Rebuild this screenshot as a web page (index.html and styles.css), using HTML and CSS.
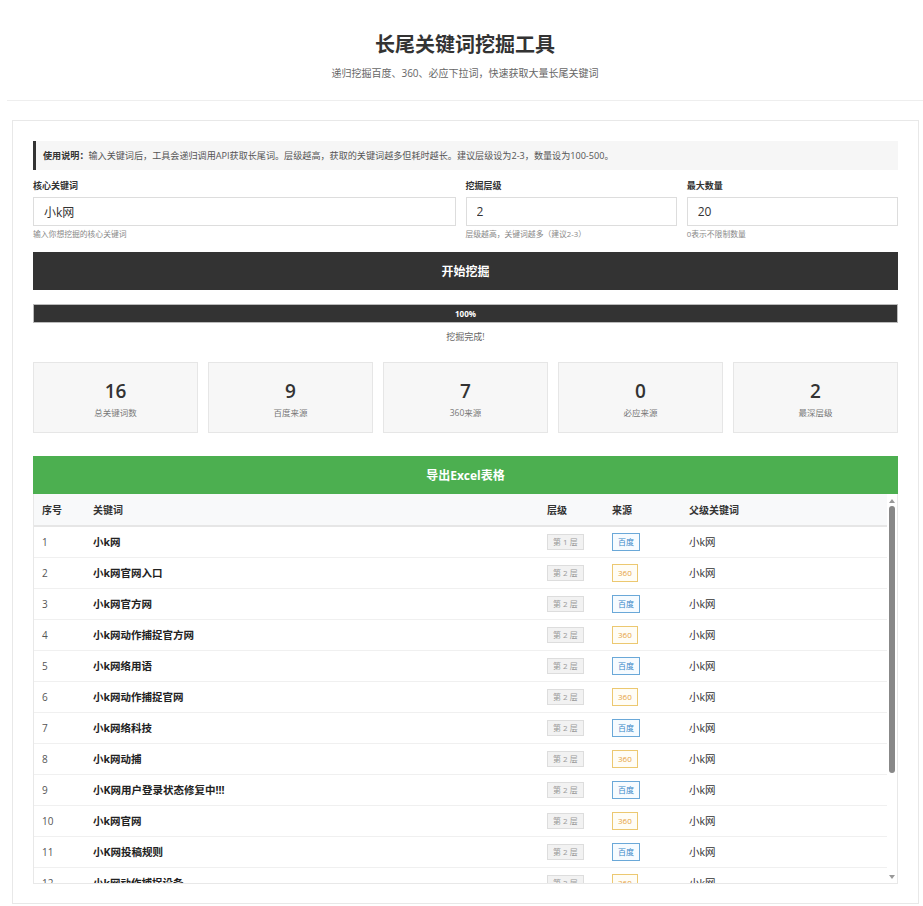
FILE: index.html
```html
<!DOCTYPE html>
<html lang="zh-CN">
<head>
    <meta charset="UTF-8">
    <meta name="viewport" content="width=device-width, initial-scale=1.0">
    <title>长尾关键词挖掘工具</title>
    <link rel="stylesheet" href="styles.css">
</head>
<body>
<div class="page">
    <header class="header">
        <h1>长尾关键词挖掘工具</h1>
        <p class="subtitle">递归挖掘百度、360、必应下拉词，快速获取大量长尾关键词</p>
    </header>

    <main class="card">
        <div class="notice">
            <strong>使用说明：</strong>输入关键词后，工具会递归调用API获取长尾词。层级越高，获取的关键词越多但耗时越长。建议层级设为2-3，数量设为100-500。
        </div>

        <div class="form-row">
            <div class="field">
                <label for="keyword">核心关键词</label>
                <input type="text" id="keyword" value="小k网">
                <div class="hint">输入你想挖掘的核心关键词</div>
            </div>
            <div class="field">
                <label for="depth">挖掘层级</label>
                <input type="text" id="depth" value="2">
                <div class="hint">层级越高，关键词越多（建议2-3）</div>
            </div>
            <div class="field">
                <label for="maxCount">最大数量</label>
                <input type="text" id="maxCount" value="20">
                <div class="hint">0表示不限制数量</div>
            </div>
        </div>

        <button class="btn btn-start">开始挖掘</button>

        <div class="progress">
            <div class="progress-fill" style="width: 100%">100%</div>
        </div>
        <div class="status">挖掘完成!</div>

        <div class="stats">
            <div class="stat"><div class="stat-num">16</div><div class="stat-label">总关键词数</div></div>
            <div class="stat"><div class="stat-num">9</div><div class="stat-label">百度来源</div></div>
            <div class="stat"><div class="stat-num">7</div><div class="stat-label">360来源</div></div>
            <div class="stat"><div class="stat-num">0</div><div class="stat-label">必应来源</div></div>
            <div class="stat"><div class="stat-num">2</div><div class="stat-label">最深层级</div></div>
        </div>

        <button class="btn btn-export">导出Excel表格</button>

        <div class="table-box">
            <div class="table-wrap">
                <table class="result-table">
                    <colgroup>
                        <col class="c-idx"><col class="c-kw"><col class="c-lvl"><col class="c-src"><col>
                    </colgroup>
                    <thead>
                        <tr><th>序号</th><th>关键词</th><th>层级</th><th>来源</th><th>父级关键词</th></tr>
                    </thead>
                    <tbody id="rows"></tbody>
                </table>
            </div>
            <!-- scrollbar drawn by hand, the screenshot browser hides native ones -->
            <div class="scrollbar">
                <span class="arrow arrow-up"></span>
                <span class="thumb"></span>
                <span class="arrow arrow-down"></span>
            </div>
        </div>
    </main>
</div>

<script>
    const data = [
        ['小k网', 1, 'baidu'],
        ['小k网官网入口', 2, '360'],
        ['小k网官方网', 2, 'baidu'],
        ['小k网动作捕捉官方网', 2, '360'],
        ['小k网络用语', 2, 'baidu'],
        ['小k网动作捕捉官网', 2, '360'],
        ['小k网络科技', 2, 'baidu'],
        ['小k网动捕', 2, '360'],
        ['小K网用户登录状态修复中!!!', 2, 'baidu'],
        ['小k网官网', 2, '360'],
        ['小K网投稿规则', 2, 'baidu'],
        ['小k网动作捕捉设备', 2, '360'],
        ['小k网app', 2, 'baidu'],
        ['小k网下载', 2, 'baidu'],
        ['小k网是什么', 2, 'baidu'],
        ['小k网怎么样', 2, '360']
    ];

    const tbody = document.getElementById('rows');
    data.forEach((row, i) => {
        const tr = document.createElement('tr');
        const src = row[2] === 'baidu'
            ? '<span class="src src-baidu">百度</span>'
            : '<span class="src src-360">360</span>';
        tr.innerHTML = `
            <td class="idx">${i + 1}</td>
            <td class="kw">${row[0]}</td>
            <td><span class="level">第 ${row[1]} 层</span></td>
            <td>${src}</td>
            <td class="parent">小k网</td>
        `;
        tbody.appendChild(tr);
    });
</script>
</body>
</html>
```

FILE: styles.css
```css
* {
    box-sizing: border-box;
}

body {
    margin: 0;
    background: #fff;
    font-family: "Open Sans", "Noto Sans CJK SC", sans-serif;
    color: #333;
}

.page {
    padding-left: 7px;
}

.header {
    text-align: center;
    padding: 31px 0 20px;
    border-bottom: 1px solid #eee;
}

.header h1 {
    margin: 0;
    font-size: 20px;
    line-height: 28px;
    font-weight: bold;
    color: #333;
}

.subtitle {
    margin: 7px 0 0;
    font-size: 10px;
    line-height: 14px;
    color: #666;
}

.card {
    margin: 19px 4px 0 5px;
    padding: 20px 20px 19px;
    border: 1px solid #e8e8e8;
}

.notice {
    background: #f6f6f6;
    border-left: 3px solid #333;
    padding: 8px 8px 8px 7px;
    font-size: 9.1px;
    line-height: 13px;
    color: #555;
}

.notice strong {
    color: #333;
}

.form-row {
    display: grid;
    grid-template-columns: 2fr 1fr 1fr;
    gap: 10px;
    margin-top: 10px;
}

label {
    display: block;
    font-size: 9px;
    line-height: 12px;
    font-weight: bold;
    color: #333;
    margin-bottom: 5px;
}

input[type="text"] {
    display: block;
    width: 100%;
    height: 29px;
    padding: 0 10px;
    border: 1px solid #ddd;
    font-family: inherit;
    font-size: 12px;
    color: #333;
    outline: none;
}

.hint {
    margin-top: 3px;
    font-size: 7.8px;
    line-height: 10px;
    color: #888;
}

.btn {
    display: block;
    width: 100%;
    border: none;
    color: #fff;
    font-family: inherit;
    font-size: 12px;
    font-weight: bold;
    cursor: pointer;
}

.btn-start {
    height: 38px;
    margin-top: 13px;
    background: #333;
}

.progress {
    margin-top: 14px;
    height: 19px;
    border: 1px solid #bbb;
    background: #eee;
}

.progress-fill {
    height: 100%;
    background: #333;
    color: #fff;
    font-size: 8px;
    font-weight: bold;
    line-height: 17px;
    text-align: center;
}

.status {
    margin-top: 8px;
    text-align: center;
    font-size: 9px;
    line-height: 12px;
    color: #666;
}

.stats {
    display: grid;
    grid-template-columns: repeat(5, 1fr);
    gap: 10px;
    margin-top: 19px;
}

.stat {
    height: 71px;
    padding-top: 16px;
    background: #f7f7f7;
    border: 1px solid #e6e6e6;
    text-align: center;
}

.stat-num {
    font-size: 19px;
    line-height: 25px;
    font-weight: 600;
    color: #333;
}

.stat-label {
    margin-top: 3px;
    font-size: 8.5px;
    line-height: 12px;
    color: #777;
}

.btn-export {
    height: 38px;
    margin-top: 23px;
    background: #4caf50;
}

.table-box {
    display: flex;
    height: 390px;
    border: 1px solid #e8e8e8;
    border-top: none;
}

.table-wrap {
    flex: 1;
    overflow: hidden;
}

.scrollbar {
    width: 10px;
    display: flex;
    flex-direction: column;
    align-items: center;
    padding: 5px 0 4px;
    background: #fff;
}

.arrow {
    width: 0;
    height: 0;
    border-left: 3px solid transparent;
    border-right: 3px solid transparent;
}

.arrow-up {
    border-bottom: 4px solid #999;
}

.arrow-down {
    margin-top: auto;
    border-top: 4px solid #999;
}

.thumb {
    width: 6px;
    height: 267px;
    margin-top: 3px;
    background: #888;
    border-radius: 3px;
}

.result-table {
    width: 100%;
    border-collapse: collapse;
    table-layout: fixed;
    font-size: 10px;
}

.c-idx { width: 51px; }
.c-kw { width: 454px; }
.c-lvl { width: 65px; }
.c-src { width: 77px; }

.result-table th {
    height: 32px;
    padding: 0 8px;
    background: #f8f9fa;
    border-bottom: 2px solid #e6e6e6;
    text-align: left;
    font-weight: bold;
    color: #333;
}

.result-table td {
    height: 31px;
    padding: 0 8px;
    border-bottom: 1px solid #f0f0f0;
    color: #333;
    white-space: nowrap;
    overflow: hidden;
}

.result-table td.idx {
    color: #555;
}

.result-table td.kw {
    font-size: 10.5px;
    font-weight: bold;
    color: #222;
}

.result-table td.parent {
    font-size: 10.5px;
}

.level {
    display: inline-block;
    padding: 1px 5px;
    background: #f2f2f2;
    border: 1px solid #ddd;
    color: #999;
    font-size: 8px;
    line-height: 12px;
}

.src {
    display: inline-block;
    padding: 2px 5px;
    border: 1px solid;
    font-size: 8px;
    line-height: 12px;
}

.src-baidu {
    border-color: #6aa8d8;
    color: #3a88c8;
    background: #f6fbff;
}

.src-360 {
    border-color: #ecc870;
    color: #e6a23c;
    background: #fffdf6;
}
```
